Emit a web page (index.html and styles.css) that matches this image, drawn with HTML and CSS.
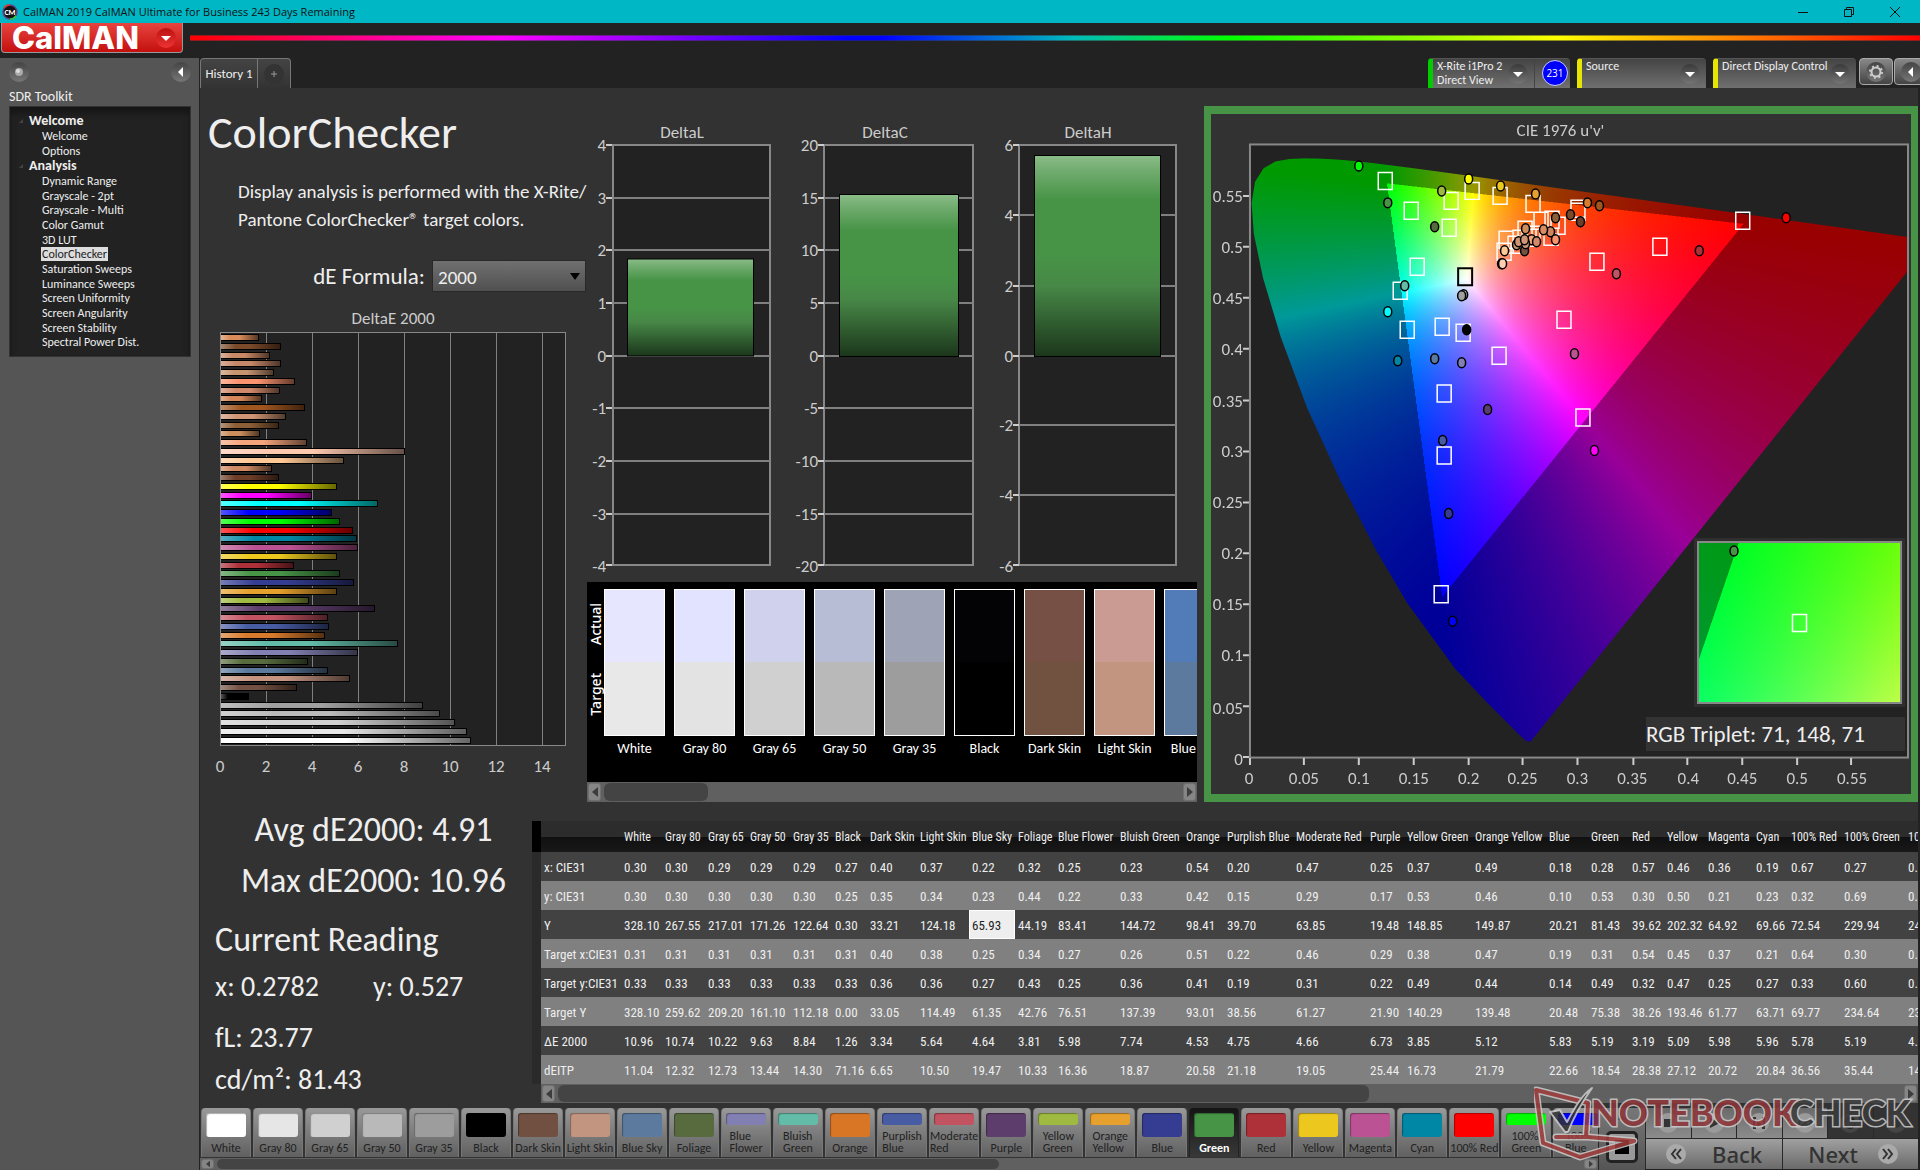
FILE: index.html
```html
<!DOCTYPE html>
<html lang="en">
<head>
<meta charset="utf-8">
<title>CalMAN 2019 CalMAN Ultimate for Business 243 Days Remaining</title>
<link rel="stylesheet" href="styles.css">
</head>
<body>
<header class="titlebar">
  <svg class="app-icon" viewBox="0 0 16 16" aria-hidden="true"><circle cx="8" cy="8" r="7" fill="#111" stroke="#5a4a8a" stroke-width="1.5"/><path d="M2 4A7 7 0 0 1 8 1" stroke="#d33" stroke-width="1.5" fill="none"/><path d="M14 12A7 7 0 0 1 8 15" stroke="#3c3" stroke-width="1.5" fill="none"/><text x="8" y="11" text-anchor="middle" font-size="8" font-weight="700" fill="#fff">CM</text></svg>
  <span class="window-title">CalMAN 2019 CalMAN Ultimate for Business 243 Days Remaining</span>
  <div class="window-buttons">
    <button aria-label="Minimize"><svg viewBox="0 0 12 12"><path d="M1 6.5h10"/></svg></button>
    <button aria-label="Restore"><svg viewBox="0 0 12 12"><path d="M1.500 3.500h7v7h-7zM3.500 3.500v-2h7v7h-2"/></svg></button>
    <button aria-label="Close"><svg viewBox="0 0 12 12"><path d="M1 1l10 10M11 1L1 11"/></svg></button>
  </div>
</header>
<div class="brandbar">
  <button class="brand">CalMAN<span class="round round-red"><svg viewBox="0 0 20 20"><path d="M5 8h10l-5 5z" fill="#fff"/></svg></span></button>
  <div class="rainbow"></div>
</div>
<div class="workspace">
  <aside class="sidebar">
    <div class="sidebar-top">
      <button class="round" aria-label="Pin"><svg viewBox="0 0 20 20"><circle cx="10" cy="10" r="4" fill="#aaa"/><circle cx="9" cy="9" r="2" fill="#ddd"/></svg></button>
      <button class="round" aria-label="Collapse"><svg viewBox="0 0 20 20"><path d="M12 5v10l-5-5z" fill="#fff"/></svg></button>
    </div>
    <h2 class="sidebar-title">SDR Toolkit</h2>
    <nav class="tree">
      <h3>Welcome</h3>
      <ul class="short"><li><a href="#">Welcome</a></li><li><a href="#">Options</a></li></ul>
      <h3>Analysis</h3>
      <ul class="long"><li><a href="#">Dynamic Range</a></li><li><a href="#">Grayscale - 2pt</a></li><li><a href="#">Grayscale - Multi</a></li><li><a href="#">Color Gamut</a></li><li><a href="#">3D LUT</a></li><li><a href="#" class="current">ColorChecker</a></li><li><a href="#">Saturation Sweeps</a></li><li><a href="#">Luminance Sweeps</a></li><li><a href="#">Screen Uniformity</a></li><li><a href="#">Screen Angularity</a></li><li><a href="#">Screen Stability</a></li><li><a href="#">Spectral Power Dist.</a></li></ul>
    </nav>
  </aside>
  <div class="stage">
    <div class="tabs">
      <div class="tabset"><button class="tab">History 1</button><button class="tab tab-add" aria-label="Add tab"><span class="round"><svg viewBox="0 0 20 20"><path d="M10 7v6M7 10h6" stroke="#999"/></svg></span></button></div>
      <div class="devices">
        <button class="device meter"><span class="device-name">X-Rite i1Pro 2<br>Direct View</span><span class="round"><svg viewBox="0 0 20 20"><path d="M5 8h10l-5 5z" fill="#fff"/></svg></span><span class="badge-slot"><span class="badge">231</span></span></button>
        <button class="device source"><span class="device-name">Source</span><span class="round"><svg viewBox="0 0 20 20"><path d="M5 8h10l-5 5z" fill="#fff"/></svg></span></button>
        <button class="device display"><span class="device-name">Direct Display Control</span><span class="round"><svg viewBox="0 0 20 20"><path d="M5 8h10l-5 5z" fill="#fff"/></svg></span></button>
        <button class="tool" aria-label="Settings"><span class="round"><svg viewBox="0 0 20 20"><circle cx="10" cy="10" r="4.500" fill="none" stroke="#ccc" stroke-width="2"/><circle cx="10" cy="10" r="6" fill="none" stroke="#ccc" stroke-width="2" stroke-dasharray="2 2.700"/></svg></span></button>
        <button class="tool" aria-label="Collapse panel"><span class="round"><svg viewBox="0 0 20 20"><path d="M12 5v10l-5-5z" fill="#fff"/></svg></span></button>
      </div>
    </div>
    <main class="main">
      <section class="upper">
        <div class="intro">
          <h1>ColorChecker</h1>
          <p class="lead">Display analysis is performed with the X-Rite/<br>Pantone ColorChecker® target colors.</p>
          <div class="formula"><label for="formula">dE Formula:</label><div class="select"><select id="formula"><option>2000</option></select></div></div>
          <h2 class="chart-title">DeltaE 2000</h2>
          <div class="hbars">
            <i style="width:11.100%;--c:#d98c5a"></i><i style="width:17.500%;--c:#7a4a2a"></i><i style="width:14.300%;--c:#c98966"></i><i style="width:17.500%;--c:#c58868"></i><i style="width:15.400%;--c:#c79470"></i><i style="width:21.500%;--c:#f9946f"></i><i style="width:17.200%;--c:#d1896b"></i><i style="width:12%;--c:#d6875a"></i><i style="width:24.400%;--c:#a0561f"></i><i style="width:18.900%;--c:#d09574"></i><i style="width:16.800%;--c:#8d5f36"></i><i style="width:11.400%;--c:#cb8e5c"></i><i style="width:25%;--c:#f5a57c"></i><i style="width:53.400%;--c:#ffc9b0"></i><i style="width:35.700%;--c:#ffc897"></i><i style="width:14.900%;--c:#cf8a63"></i><i style="width:16.800%;--c:#6e3e28"></i><i style="width:33.700%;--c:#ff0"></i><i style="width:26.400%;--c:#f0f"></i><i style="width:45.600%;--c:#0ff"></i><i style="width:32.200%;--c:#00f"></i><i style="width:34.600%;--c:#0f0"></i><i style="width:38.300%;--c:#f00"></i><i style="width:39.500%;--c:#0087a5"></i><i style="width:39.800%;--c:#bb5293"></i><i style="width:33.700%;--c:#ecc81f"></i><i style="width:21.200%;--c:#ae3038"></i><i style="width:34.600%;--c:#479447"></i><i style="width:38.600%;--c:#343d92"></i><i style="width:33.700%;--c:#e6a02d"></i><i style="width:25.600%;--c:#9fba40"></i><i style="width:44.700%;--c:#5d3d6b"></i><i style="width:31.100%;--c:#c25360"></i><i style="width:31.400%;--c:#485ca4"></i><i style="width:30.200%;--c:#d87a2c"></i><i style="width:51.400%;--c:#63bca8"></i><i style="width:39.800%;--c:#8280b2"></i><i style="width:25.300%;--c:#586b3f"></i><i style="width:31.100%;--c:#5c7a9e"></i><i style="width:37.500%;--c:#c59480"></i><i style="width:22.100%;--c:#735143"></i><i style="width:8.200%;--c:#000"></i><i style="width:58.600%;--c:#a0a0a0"></i><i style="width:63.800%;--c:#bababa"></i><i style="width:67.900%;--c:#d2d2d2"></i><i style="width:71.600%;--c:#e8e8e8"></i><i style="width:72.800%;--c:#fff"></i>
          </div>
          <div class="haxis"><span>0</span><span>2</span><span>4</span><span>6</span><span>8</span><span>10</span><span>12</span><span>14</span></div>
        </div>
        <div class="middle">
          <svg class="deltas" viewBox="587 106 610 476" role="img" aria-label="DeltaL, DeltaC and DeltaH bar charts">
            <defs><linearGradient id="bar" x1="0" y1="0" x2="0" y2="1"><stop offset="0" stop-color="#8bbd88"/><stop offset=".08" stop-color="#70ab6e"/><stop offset=".22" stop-color="#479447"/><stop offset=".5" stop-color="#479447"/><stop offset=".65" stop-color="#478747"/><stop offset="1" stop-color="#1b361b"/></linearGradient></defs>
            <g class="plot"><rect x="613" y="145" width="157" height="420"/><rect x="824" y="145" width="149" height="420"/><rect x="1019" y="145" width="157" height="420"/></g>
            <path class="grid" d="M613 198h157M613 250h157M613 303h157M613 356h157M613 408h157M613 461h157M613 514h157M824 198h149M824 250h149M824 303h149M824 356h149M824 408h149M824 461h149M824 514h149M1019 215h157M1019 286h157M1019 356h157M1019 425h157M1019 495h157"/>
            <path class="ticks" d="M606 145h6M606 198h6M606 250h6M606 303h6M606 356h6M606 408h6M606 461h6M606 514h6M606 565h6M818 145h6M818 198h6M818 250h6M818 303h6M818 356h6M818 408h6M818 461h6M818 514h6M818 565h6M1013 145h6M1013 215h6M1013 286h6M1013 356h6M1013 425h6M1013 495h6M1013 565h6"/>
            <g fill="url(#bar)" stroke="#000"><rect x="627.500" y="259" width="126" height="97"/><rect x="839.500" y="194.500" width="119" height="162"/><rect x="1034.500" y="155.500" width="126" height="201"/></g>
            <g class="axis" text-anchor="middle"><text x="682" y="138">DeltaL</text><text x="885" y="138">DeltaC</text><text x="1088" y="138">DeltaH</text></g>
            <g class="axis" text-anchor="end"><text x="606" y="151">4</text><text x="606" y="204">3</text><text x="606" y="256">2</text><text x="606" y="309">1</text><text x="606" y="362">0</text><text x="606" y="414">-1</text><text x="606" y="467">-2</text><text x="606" y="520">-3</text><text x="606" y="572">-4</text><text x="818" y="151">20</text><text x="818" y="204">15</text><text x="818" y="256">10</text><text x="818" y="309">5</text><text x="818" y="362">0</text><text x="818" y="414">-5</text><text x="818" y="467">-10</text><text x="818" y="520">-15</text><text x="818" y="572">-20</text><text x="1013" y="151">6</text><text x="1013" y="221">4</text><text x="1013" y="292">2</text><text x="1013" y="362">0</text><text x="1013" y="431">-2</text><text x="1013" y="501">-4</text><text x="1013" y="572">-6</text></g>
          </svg>
          <div class="strip">
            <div class="strip-side"><span>Actual</span><span>Target</span></div>
            <div class="patches">
              <figure><div style="--a:#e6e6ff;--t:#e8e8e8"></div><figcaption>White</figcaption></figure>
              <figure><div style="--a:#e1e3ff;--t:#e3e3e3"></div><figcaption>Gray 80</figcaption></figure>
              <figure><div style="--a:#d0d1ec;--t:#d0d0d0"></div><figcaption>Gray 65</figcaption></figure>
              <figure><div style="--a:#b7bdd4;--t:#b9b9b9"></div><figcaption>Gray 50</figcaption></figure>
              <figure><div style="--a:#9ea4b6;--t:#9d9d9d"></div><figcaption>Gray 35</figcaption></figure>
              <figure><div style="--a:#030305;--t:#000"></div><figcaption>Black</figcaption></figure>
              <figure><div style="--a:#775045;--t:#715241"></div><figcaption>Dark Skin</figcaption></figure>
              <figure><div style="--a:#c99b93;--t:#c29580"></div><figcaption>Light Skin</figcaption></figure>
              <figure><div style="--a:#527cb8;--t:#5c7a9e"></div><figcaption>Blue Sky</figcaption></figure>
            </div>
          </div>
          <div class="scroll scroll-strip"><button aria-label="Scroll left"><svg viewBox="0 0 8 12"><path d="M7 1v10L1 6z"/></svg></button><span class="thumb"></span><button aria-label="Scroll right"><svg viewBox="0 0 8 12"><path d="M1 1v10l6-5z"/></svg></button></div>
        </div>
        <div class="cie">
          <canvas id="gamut" width="1320" height="1228"></canvas>
          <svg class="cie-plot" viewBox="1211 114 701 681" role="img" aria-label="CIE 1976 u'v' chromaticity diagram">
            <rect class="frame" x="1250" y="144.500" width="659" height="614"/>
            <path class="ticks" d="M1243 758h6M1243 707h6M1243 656h6M1243 605h6M1243 554h6M1243 503h6M1243 452h6M1243 401h6M1243 349h6M1243 298h6M1243 247h6M1243 196h6M1250 759v7M1304 759v7M1359 759v7M1414 759v7M1469 759v7M1523 759v7M1578 759v7M1634 759v7M1688 759v7M1743 759v7M1798 759v7M1852 759v7"/>
            <g class="axis" text-anchor="end"><text x="1243" y="766">0</text><text x="1243" y="715">0.05</text><text x="1243" y="662">0.1</text><text x="1243" y="611">0.15</text><text x="1243" y="560">0.2</text><text x="1243" y="509">0.25</text><text x="1243" y="458">0.3</text><text x="1243" y="407">0.35</text><text x="1243" y="355">0.4</text><text x="1243" y="304">0.45</text><text x="1243" y="253">0.5</text><text x="1243" y="202">0.55</text></g>
            <g class="axis" text-anchor="middle"><text x="1561" y="136">CIE 1976 u'v'</text><text x="1249" y="785">0</text><text x="1304" y="785">0.05</text><text x="1359" y="785">0.1</text><text x="1414" y="785">0.15</text><text x="1469" y="785">0.2</text><text x="1523" y="785">0.25</text><text x="1578" y="785">0.3</text><text x="1633" y="785">0.35</text><text x="1689" y="785">0.4</text><text x="1743" y="785">0.45</text><text x="1798" y="785">0.5</text><text x="1853" y="785">0.55</text></g>
            <path class="targets" d="M1378.500 172.500h14v17h-14zM1404.500 202.500h14v17h-14zM1444.500 192.500h14v17h-14zM1465.500 182.500h14v17h-14zM1442.500 219.500h14v17h-14zM1493.500 187.500h14v17h-14zM1526.500 195.500h14v17h-14zM1410.500 258.500h14v17h-14zM1393.500 282.500h14v17h-14zM1400.500 321.500h14v17h-14zM1435.500 318.500h14v17h-14zM1456.500 324.500h14v17h-14zM1492.500 347.500h14v17h-14zM1437.500 385.500h14v17h-14zM1557.500 311.500h14v17h-14zM1590.500 253.500h14v17h-14zM1653.500 238.500h14v17h-14zM1736.500 212.500h14v17h-14zM1576.500 409.500h14v17h-14zM1437.500 447.500h14v17h-14zM1434.500 586.500h14v17h-14zM1499.500 231.500h14v17h-14zM1497.500 243.500h14v17h-14zM1508.500 236.500h14v17h-14zM1513.500 230.500h14v17h-14zM1518.500 221.500h14v17h-14zM1534.500 212.500h14v17h-14zM1545.500 211.500h14v17h-14zM1551.500 217.500h14v17h-14zM1544.500 228.500h14v17h-14zM1571.500 200.500h14v17h-14zM1571.500 203.500h14v17h-14zM1526.500 226.500h14v17h-14zM1522.500 229.500h14v17h-14zM1513.500 236.500h14v17h-14z"/>
            <rect x="1458.500" y="268.500" width="14" height="17" fill="none" stroke="#000" stroke-width="2"/>
            <g class="dots">
              <ellipse cx="1359" cy="166" fill="#0f0"/><ellipse cx="1388" cy="203" fill="#479447"/><ellipse cx="1442" cy="191" fill="#9fba40"/><ellipse cx="1469" cy="179" fill="#ff0"/><ellipse cx="1501" cy="186" fill="#ecc81f"/><ellipse cx="1536" cy="194" fill="#e6a02d"/><ellipse cx="1435" cy="227" fill="#586b3f"/><ellipse cx="1405" cy="286" fill="#63bca8"/><ellipse cx="1388" cy="312" fill="#0ff"/><ellipse cx="1398" cy="361" fill="#0087a5"/><ellipse cx="1435" cy="359" fill="#5c7a9e"/><ellipse cx="1462" cy="363" fill="#8280b2"/><ellipse cx="1467" cy="330" fill="#000"/><ellipse cx="1464" cy="295" fill="#bbb"/><ellipse cx="1462" cy="296" fill="#a0a0a0"/><ellipse cx="1575" cy="354" fill="#bb5293"/><ellipse cx="1617" cy="274" fill="#c25360"/><ellipse cx="1700" cy="251" fill="#ae3038"/><ellipse cx="1787" cy="218" fill="#f00"/><ellipse cx="1488" cy="410" fill="#5d3d6b"/><ellipse cx="1443" cy="441" fill="#485ca4"/><ellipse cx="1595" cy="451" fill="#f0f"/><ellipse cx="1449" cy="514" fill="#343d92"/><ellipse cx="1453" cy="622" fill="#00f"/><ellipse cx="1588" cy="203" fill="#d87a2c"/><ellipse cx="1600" cy="206" fill="#a0561f"/><ellipse cx="1571" cy="215" fill="#7a4a2a"/><ellipse cx="1581" cy="222" fill="#6e3e28"/><ellipse cx="1556" cy="218" fill="#8d5f36"/><ellipse cx="1551" cy="232" fill="#cd8562"/><ellipse cx="1544" cy="230" fill="#d98c63"/><ellipse cx="1556" cy="240" fill="#f9946f"/><ellipse cx="1526" cy="229" fill="#cb8e5c"/><ellipse cx="1525" cy="251" fill="#735143"/><ellipse cx="1532" cy="240" fill="#f5a57c"/><ellipse cx="1517" cy="245" fill="#c79470"/><ellipse cx="1526" cy="244" fill="#c59480"/><ellipse cx="1537" cy="242" fill="#d1896b"/><ellipse cx="1519" cy="242" fill="#d09574"/><ellipse cx="1525" cy="240" fill="#d09574"/><ellipse cx="1505" cy="251" fill="#ffc897"/><ellipse cx="1502" cy="264" fill="#ffc9b0"/><ellipse cx="1503" cy="264" fill="#ffcfb4"/>
            </g>
          </svg>
          <div class="cie-side">
            <div class="inset"><canvas id="detail" width="402" height="318"></canvas><svg viewBox="0 0 201 159"><rect class="targets" x="93.500" y="71.500" width="14" height="17"/><g class="dots"><ellipse cx="35" cy="8" fill="#479447"/></g></svg></div>
            <output class="triplet">RGB Triplet: 71, 148, 71</output>
          </div>
        </div>
      </section>
      <section class="lower">
        <div class="stats">
          <p class="big">Avg dE2000: 4.91</p><p class="big">Max dE2000: 10.96</p>
          <h2>Current Reading</h2>
          <p class="pair"><span>x: 0.2782</span><span>y: 0.527</span></p>
          <p class="fl">fL: 23.77</p><p>cd/m²: 81.43</p>
        </div>
        <div class="grid-view">
          <div class="gutter"></div>
          <div class="table-area">
          <table>
            <colgroup><col style="width:80px"><col style="width:41px"><col style="width:43px"><col style="width:42px"><col style="width:43px"><col style="width:42px"><col style="width:35px"><col style="width:50px"><col style="width:52px"><col style="width:46px"><col style="width:40px"><col style="width:62px"><col style="width:66px"><col style="width:41px"><col style="width:69px"><col style="width:74px"><col style="width:37px"><col style="width:68px"><col style="width:74px"><col style="width:42px"><col style="width:41px"><col style="width:35px"><col style="width:41px"><col style="width:48px"><col style="width:35px"><col style="width:53px"><col style="width:64px"><col style="width:60px"></colgroup>
            <thead><tr><th></th><th>White</th><th>Gray 80</th><th>Gray 65</th><th>Gray 50</th><th>Gray 35</th><th>Black</th><th>Dark Skin</th><th>Light Skin</th><th>Blue Sky</th><th>Foliage</th><th>Blue Flower</th><th>Bluish Green</th><th>Orange</th><th>Purplish Blue</th><th>Moderate Red</th><th>Purple</th><th>Yellow Green</th><th>Orange Yellow</th><th>Blue</th><th>Green</th><th>Red</th><th>Yellow</th><th>Magenta</th><th>Cyan</th><th>100% Red</th><th>100% Green</th><th>100% Blue</th></tr></thead>
            <tbody>
            <tr><th>x: CIE31</th><td>0.30</td><td>0.30</td><td>0.29</td><td>0.29</td><td>0.29</td><td>0.27</td><td>0.40</td><td>0.37</td><td>0.22</td><td>0.32</td><td>0.25</td><td>0.23</td><td>0.54</td><td>0.20</td><td>0.47</td><td>0.25</td><td>0.37</td><td>0.49</td><td>0.18</td><td>0.28</td><td>0.57</td><td>0.46</td><td>0.36</td><td>0.19</td><td>0.67</td><td>0.27</td><td>0.15</td></tr>
            <tr><th>y: CIE31</th><td>0.30</td><td>0.30</td><td>0.30</td><td>0.30</td><td>0.30</td><td>0.25</td><td>0.35</td><td>0.34</td><td>0.23</td><td>0.44</td><td>0.22</td><td>0.33</td><td>0.42</td><td>0.15</td><td>0.29</td><td>0.17</td><td>0.53</td><td>0.46</td><td>0.10</td><td>0.53</td><td>0.30</td><td>0.50</td><td>0.21</td><td>0.23</td><td>0.32</td><td>0.69</td><td>0.05</td></tr>
            <tr><th>Y</th><td>328.10</td><td>267.55</td><td>217.01</td><td>171.26</td><td>122.64</td><td>0.30</td><td>33.21</td><td>124.18</td><td class="selected">65.93</td><td>44.19</td><td>83.41</td><td>144.72</td><td>98.41</td><td>39.70</td><td>63.85</td><td>19.48</td><td>148.85</td><td>149.87</td><td>20.21</td><td>81.43</td><td>39.62</td><td>202.32</td><td>64.92</td><td>69.66</td><td>72.54</td><td>229.94</td><td>24.10</td></tr>
            <tr><th>Target x:CIE31</th><td>0.31</td><td>0.31</td><td>0.31</td><td>0.31</td><td>0.31</td><td>0.31</td><td>0.40</td><td>0.38</td><td>0.25</td><td>0.34</td><td>0.27</td><td>0.26</td><td>0.51</td><td>0.22</td><td>0.46</td><td>0.29</td><td>0.38</td><td>0.47</td><td>0.19</td><td>0.31</td><td>0.54</td><td>0.45</td><td>0.37</td><td>0.21</td><td>0.64</td><td>0.30</td><td>0.15</td></tr>
            <tr><th>Target y:CIE31</th><td>0.33</td><td>0.33</td><td>0.33</td><td>0.33</td><td>0.33</td><td>0.33</td><td>0.36</td><td>0.36</td><td>0.27</td><td>0.43</td><td>0.25</td><td>0.36</td><td>0.41</td><td>0.19</td><td>0.31</td><td>0.22</td><td>0.49</td><td>0.44</td><td>0.14</td><td>0.49</td><td>0.32</td><td>0.47</td><td>0.25</td><td>0.27</td><td>0.33</td><td>0.60</td><td>0.06</td></tr>
            <tr><th>Target Y</th><td>328.10</td><td>259.62</td><td>209.20</td><td>161.10</td><td>112.18</td><td>0.00</td><td>33.05</td><td>114.49</td><td>61.35</td><td>42.76</td><td>76.51</td><td>137.39</td><td>93.01</td><td>38.56</td><td>61.27</td><td>21.90</td><td>140.29</td><td>139.48</td><td>20.48</td><td>75.38</td><td>38.26</td><td>193.46</td><td>61.77</td><td>63.71</td><td>69.77</td><td>234.64</td><td>23.69</td></tr>
            <tr><th>ΔE 2000</th><td>10.96</td><td>10.74</td><td>10.22</td><td>9.63</td><td>8.84</td><td>1.26</td><td>3.34</td><td>5.64</td><td>4.64</td><td>3.81</td><td>5.98</td><td>7.74</td><td>4.53</td><td>4.75</td><td>4.66</td><td>6.73</td><td>3.85</td><td>5.12</td><td>5.83</td><td>5.19</td><td>3.19</td><td>5.09</td><td>5.98</td><td>5.96</td><td>5.78</td><td>5.19</td><td>4.84</td></tr>
            <tr><th>dEITP</th><td>11.04</td><td>12.32</td><td>12.73</td><td>13.44</td><td>14.30</td><td>71.16</td><td>6.65</td><td>10.50</td><td>19.47</td><td>10.33</td><td>16.36</td><td>18.87</td><td>20.58</td><td>21.18</td><td>19.05</td><td>25.44</td><td>16.73</td><td>21.79</td><td>22.66</td><td>18.54</td><td>28.38</td><td>27.12</td><td>20.72</td><td>20.84</td><td>36.56</td><td>35.44</td><td>14.20</td></tr>
            </tbody>
          </table>
          <div class="scroll scroll-table"><button aria-label="Scroll left"><svg viewBox="0 0 8 12"><path d="M7 1v10L1 6z"/></svg></button><span class="thumb"></span><button aria-label="Scroll right"><svg viewBox="0 0 8 12"><path d="M1 1v10l6-5z"/></svg></button></div>
          </div>
        </div>
      </section>
      <footer class="dock">
        <div class="swatch-area">
          <div class="swatches">
            <button><i style="--c:#fff"></i><span>White</span></button><button><i style="--c:#e6e6e6"></i><span>Gray 80</span></button><button><i style="--c:#d0d0d0"></i><span>Gray 65</span></button><button><i style="--c:#b9b9b9"></i><span>Gray 50</span></button><button><i style="--c:#9d9d9d"></i><span>Gray 35</span></button><button><i style="--c:#000"></i><span>Black</span></button><button><i style="--c:#715041"></i><span>Dark Skin</span></button><button><i style="--c:#c29580"></i><span>Light Skin</span></button><button><i style="--c:#5c7a9e"></i><span>Blue Sky</span></button><button><i style="--c:#586b3f"></i><span>Foliage</span></button><button><i style="--c:#8280b2"></i><span>Blue<br>Flower</span></button><button><i style="--c:#63bca8"></i><span>Bluish<br>Green</span></button><button><i style="--c:#d87626"></i><span>Orange</span></button><button><i style="--c:#485ca4"></i><span>Purplish<br>Blue</span></button><button><i style="--c:#c25360"></i><span>Moderate<br>Red</span></button><button><i style="--c:#5d3d6b"></i><span>Purple</span></button><button><i style="--c:#9fba40"></i><span>Yellow<br>Green</span></button><button><i style="--c:#e6a02d"></i><span>Orange<br>Yellow</span></button><button><i style="--c:#343d92"></i><span>Blue</span></button><button class="active"><i style="--c:#479447"></i><span>Green</span></button><button><i style="--c:#ae3038"></i><span>Red</span></button><button><i style="--c:#ecc81f"></i><span>Yellow</span></button><button><i style="--c:#bb5293"></i><span>Magenta</span></button><button><i style="--c:#0087a5"></i><span>Cyan</span></button><button><i style="--c:#f00"></i><span>100% Red</span></button><button><i style="--c:#0f0"></i><span>100%<br>Green</span></button><button><i style="--c:#00f"></i><span>100%<br>Blue</span></button>
          </div>
          <div class="scroll scroll-dock"><button aria-label="Scroll left"><svg viewBox="0 0 8 12"><path d="M7 1v10L1 6z"/></svg></button><span class="thumb"></span><button aria-label="Scroll right"><svg viewBox="0 0 8 12"><path d="M1 1v10l6-5z"/></svg></button></div>
        </div>
        <div class="pattern"><button aria-label="Pattern menu"><svg viewBox="0 0 20 20"><path d="M5 12h10l-5-5z" fill="#555"/></svg></button><button class="pattern-window" aria-label="Pattern window"></button></div>
        <div class="controls">
          <div class="transport">
            <button aria-label="Stop"><svg viewBox="0 0 20 20"><path d="M6 6h8v8H6z"/></svg></button><button aria-label="Play"><svg viewBox="0 0 20 20"><path d="M6 5l10 5-10 5z"/></svg></button><button aria-label="Read series"><svg viewBox="0 0 20 20"><path d="M4 4h3v2H6v8h1v2H4zM16 4h-3v2h1v8h-1v2h3zM8 8l5 3-5 3z"/></svg></button><button aria-label="Loop"><svg viewBox="0 0 20 20"><path d="M10 10c-2-3-6-3-6 0s4 3 6 0 6-3 6 0-4 3-6 0z" fill="none" stroke="#333" stroke-width="2"/></svg></button><button class="off" aria-label="Refresh"><svg viewBox="0 0 20 20"><path d="M5 10a5 5 0 0 1 9-3M15 10a5 5 0 0 1-9 3" fill="none" stroke="#222" stroke-width="2"/></svg></button><button class="off" aria-label="Record"><svg viewBox="0 0 20 20"><circle cx="10" cy="10" r="5"/></svg></button>
          </div>
          <div class="nav"><button class="back"><svg viewBox="0 0 20 20"><path d="M10 5l-4 5 4 5M15 5l-4 5 4 5"/></svg>Back</button><button class="next">Next<svg viewBox="0 0 20 20"><path d="M5 5l4 5-4 5M10 5l4 5-4 5"/></svg></button></div>
        </div>
        <svg class="watermark" viewBox="0 0 384 76" aria-label="Notebookcheck">
          <g fill="none" stroke-linejoin="round" stroke-linecap="round"><path d="M2 5l52 13-2 34h-30l32 0 46 4-54 16L9 58z" stroke="#ccc" stroke-width="7"/><path d="M2 5l52 13-2 34h-30l32 0 46 4-54 16L9 58z" stroke="#a33d3d" stroke-width="4"/><path d="M16 27l10-2 7 12C41 22 48 10 58 3 49 16 40 31 34 47h-3z" fill="#333" stroke="#ccc" stroke-width="2"/></g>
          <g class="mark-text"><text x="57" y="41" fill="#8f3538">NOTEBOOK</text><text x="256" y="41" fill="#3c3c3c">CHECK</text></g>
        </svg>
      </footer>
    </main>
  </div>
</div>
<script src="gamut.js"></script>
</body>
</html>
```
FILE: styles.css
```css
* { box-sizing: border-box; }
body {
  margin: 0;
  min-height: 100vh;
  display: flex;
  flex-direction: column;
  background: #222;
  color: #eee;
  font-family: Carlito, Lato, "Open Sans", sans-serif;
  font-size: 12px;
}
h1, h2, h3, p, ul, figure { margin: 0; padding: 0; font-weight: 400; }
ul { list-style: none; }
button { font: inherit; color: inherit; border: 0; padding: 0; background: none; }
svg { display: block; }

.titlebar { display: flex; align-items: center; height: 23px; background: #00b7c6; color: #111; padding: 0 2px; }
.app-icon { width: 16px; height: 16px; margin-right: 5px; }
.window-title { font: 11px/16px "Open Sans", "Noto Sans", sans-serif; flex: 1; }
.window-buttons { display: flex; }
.window-buttons button { width: 46px; height: 20px; display: grid; place-items: center; }
.window-buttons svg { width: 12px; height: 12px; fill: none; stroke: #111; }

.brandbar { display: flex; height: 35px; gap: 7px; padding-left: 1px; }
.brand {
  display: flex; align-items: center; justify-content: space-between;
  width: 182px; height: 30px; padding: 0 6px 0 10px;
  font: 800 31px/30px Inter, "Open Sans", sans-serif; color: #fff;
  background: linear-gradient(#e8443f, #c4100f);
  border: 1px solid #999; border-top: 0; border-radius: 0 0 4px 4px;
}
.rainbow {
  flex: 1; height: 6px; margin-top: 12px; border-block: 1px solid #3338;
  background: linear-gradient(90deg, #f00, #f0f 18%, #00f 38%, #00f 40%, #0bb 51%, #0f0 60%, #ff0 79%, #f00);
}
.round {
  display: grid; place-items: center; width: 20px; height: 20px; border-radius: 50%;
  background: linear-gradient(#444, #777);
}
.round svg { width: 20px; height: 20px; }
.round-red { background: linear-gradient(#b11, #e33); }

.workspace { flex: 1; display: flex; }
.sidebar { flex: 0 0 199px; background: #555; padding: 4px 8px 4px 9px; }
.sidebar-top { display: flex; justify-content: space-between; }
.sidebar-title { font-size: 14px; line-height: 18px; margin: 6px 0 0; }
.tree { background: #222; border: 1px solid #333; padding: 6px 0 6px 19px; box-shadow: inset 0 6px 6px #161616; height: 251px; }
.tree h3 { font-weight: 700; line-height: 16px; position: relative; }
.tree h3::before { content: ""; position: absolute; left: -10px; top: 6px; border: 2px solid #444; border-top-color: transparent; border-left-color: transparent; }
.tree ul { display: grid; grid-auto-rows: 1fr; padding-left: 12px; }
.tree .short { height: 29px; }
.tree .long { height: 176px; }
.tree a { color: inherit; text-decoration: none; line-height: 14px; display: inline-block; padding: 0 1px; vertical-align: top; }
.tree .current { background: #ddd; color: #222; }

.stage { flex: 1; min-width: 0; display: flex; flex-direction: column; padding: 0 2px 1px 0; border-left: 1px solid #222; }
.tabs { display: flex; justify-content: space-between; height: 30px; overflow: hidden; margin-right: -2px; }
.tabset { display: flex; border: 1px solid #777; border-bottom: 0; border-radius: 4px 4px 0 0; background: linear-gradient(#444, #333); width: 91px; }
.tab { flex: 1; font-size: 13px; display: grid; place-items: center; }
.tab-add { flex: 0 0 33px; border-left: 1px solid #777; }
.tab-add .round { background: #333; }
.devices { display: flex; margin-right: -9px; }
.device {
  display: flex; justify-content: space-between; text-align: left; line-height: 14px;
  background: linear-gradient(#444, #707070); border-top: 1px solid #555; border-left: 5px solid #e6e600;
  border-radius: 4px 4px 0 0; padding: 0 6px 0 4px; margin-right: 7px;
}
.device .round { margin-top: 5px; background: linear-gradient(#3a3a3a, #757575); }
.meter { width: 142px; border-left-color: #0c0; padding-right: 2px; }
.source { width: 129px; }
.display { width: 143px; margin-right: 3px; }
.badge-slot { align-self: stretch; border-left: 1px solid #444; padding: 1px 0 0 7px; }
.badge {
  display: block; width: 26px; height: 26px; border-radius: 50%; border: 1px solid #ccf; background: #00f;
  color: #fff; font: 10px/24px "Open Sans", sans-serif; text-align: center;
}
.tool { width: 34px; height: 27px; border: 1px solid #aaa; border-radius: 4px; background: linear-gradient(#888, #444); display: grid; place-items: center; margin-right: 1px; }

.main { flex: 1; display: flex; flex-direction: column; background: #323232; padding-top: 18px; }
.upper { display: grid; grid-template-columns: 387px 617px minmax(0, 1fr); height: 696px; }
.intro { padding-right: 1px; }
h1 { font-size: 46px; line-height: 52px; padding-left: 8px; }
.lead { font-size: 19px; line-height: 28px; padding-left: 38px; margin-top: 20px; white-space: nowrap; }
.formula { display: flex; align-items: center; justify-content: flex-end; gap: 7px; margin-top: 26px; font-size: 23px; line-height: 32px; }
.select { position: relative; width: 154px; }
.select select { appearance: none; display: block; width: 100%; height: 32px; padding: 2px 5px 0; border: 1px solid #282828; background: linear-gradient(#707070, #505050); color: #eee; font: 19px Carlito, Lato, sans-serif; }
.select::after { content: ""; position: absolute; right: 6px; top: 13px; border: 5px solid transparent; border-top: 7px solid #000; border-bottom: 0; }
.chart-title { font-size: 17px; line-height: 20px; text-align: center; color: #ccc; margin: 17px 0 3px; }
.hbars {
  margin: 0 20px; height: 414px; border: 1px solid #888; padding: 1px 0; display: flex; flex-direction: column; justify-content: space-between;
  background: repeating-linear-gradient(90deg, transparent 0 45px, #808080 45px 46px) #222;
}
.hbars i { display: block; height: 7px; border: 1px solid #000; border-left: 0; background: linear-gradient(90deg, #fff5, #fff0 25%, #0000 50%, #0009), var(--c); }
.haxis { display: grid; grid-template-columns: repeat(8, 46px); margin-left: -3px; padding-top: 10px; color: #ccc; font-size: 17px; line-height: 22px; text-align: center; }

.middle { width: 610px; }
.deltas { width: 610px; height: 476px; }
.axis { font-size: 17px; fill: #ccc; }
.plot rect { fill: #222; stroke: #888; stroke-width: 2; }
.grid { stroke: #808080; stroke-width: 2; }
.ticks { stroke: #ccc; stroke-width: 2; fill: none; }
.strip { display: flex; background: #000; height: 200px; padding-top: 7px; overflow: hidden; }
.strip-side { flex: 0 0 17px; display: flex; flex-direction: column; justify-content: space-around; align-items: center; height: 147px; font: 500 14px/17px "Noto Sans", sans-serif; color: #fff; padding-bottom: 6px; }
.strip-side span { writing-mode: vertical-rl; transform: rotate(180deg); }
.patches { display: flex; gap: 9px; overflow: hidden; }
.patches figure { flex: 0 0 61px; text-align: center; font-size: 14px; line-height: 26px; white-space: nowrap; color: #fff; }
.patches div { height: 147px; border: 1px solid #fff; background: linear-gradient(var(--a) 50%, var(--t) 50%); }

.scroll { display: flex; align-items: center; background: #606060; gap: 3px; padding: 1px; }
.scroll button { flex: 0 0 13px; align-self: stretch; display: grid; place-items: center; background: #858585; border-radius: 3px; border: 1px solid #707070; }
.scroll button:last-child { margin-left: auto; }
.scroll button svg { width: 8px; height: 12px; fill: #3c3c3c; }
.thumb { align-self: stretch; background: #444; border-radius: 6px; }
.scroll-strip { height: 20px; }
.scroll-strip .thumb { width: 104px; }
.scroll-table { height: 19px; }
.scroll-table .thumb { width: 59%; }
.scroll-dock { height: 12px; }
.scroll-dock .thumb { width: 56%; }
.scroll-dock button svg { height: 8px; }

.cie { position: relative; border: 7px solid #479447; border-block-width: 8px; display: grid; }
.cie > * { grid-area: 1 / 1; }
#gamut { width: calc(100% - 41px); height: 614px; margin: 30px 0 0 39px; background: #222; }
.cie-plot { width: 100%; height: 680px; position: relative; }
.frame { fill: none; stroke: #888; stroke-width: 2; }
.targets { fill: none; stroke: #fff; stroke-width: 1.5px; }
.dots ellipse { rx: 4px; ry: 5px; stroke: #000; stroke-width: 1.5px; }
.cie-side { position: relative; justify-self: end; align-self: end; display: flex; flex-direction: column; align-items: flex-end; gap: 8px; margin: 0 6px 43px 0; }
.inset { display: grid; border: 2px solid #888; outline: 3px solid #2f2f2f; width: 205px; height: 163px; margin: 0 3px 5px 0; }
.inset > * { grid-area: 1 / 1; width: 100%; height: 100%; }
.inset svg { position: relative; }
.triplet { width: 259px; background: #333; font-size: 23px; line-height: 34px; white-space: nowrap; }

.lower { display: grid; grid-template-columns: 332px minmax(0, 1fr); flex: 1; }
.stats { padding: 2px 0 0 15px; font-size: 28px; line-height: 36px; }
.stats .big { font-size: 34px; line-height: 51px; text-align: center; }
.stats h2 { font-size: 34px; line-height: 44px; margin: 12px 0 7px; }
.stats .pair { display: flex; gap: 54px; margin-bottom: 15px; }
.stats .fl { margin-bottom: 6px; }
.grid-view { display: flex; margin-top: 19px; }
.gutter { flex: 0 0 9px; height: 263px; background: linear-gradient(#000 31px, #2a2a2a 31px); }
.table-area { flex: 1; min-width: 0; overflow: hidden; }
table { table-layout: fixed; width: 1424px; border-collapse: collapse; font-family: "Roboto Condensed", Roboto, sans-serif; font-size: 13px; color: #eee; }
th, td { padding: 1px 0 0 3px; text-align: left; font-weight: 400; white-space: nowrap; }
thead tr { height: 31px; background: linear-gradient(#2c2c2c 50%, #101010 50%, #181818); font-size: 12px; }
tbody tr { height: 29px; background: #424242; }
tbody tr:nth-child(even) { background: #808080; }
td.selected { background: #eee; color: #222; box-shadow: inset 0 0 0 1px #fff; }

.dock { position: relative; display: grid; grid-template-columns: minmax(0, 1fr) 46px 272px; gap: 1px; background: #282828; margin-top: 5px; height: 61px; }
.swatch-area { background: #333; }
.swatches { display: flex; gap: 2px; height: 50px; overflow: hidden; padding-left: 1px; }
.swatches button {
  flex: 0 0 50px; display: flex; flex-direction: column; align-items: center; height: 49px; padding: 5px 0 3px;
  background: linear-gradient(#999, #606060); border: 1px solid #777; border-block: 0; border-radius: 4px 4px 0 0; color: #222; line-height: 12px;
}
.swatches i { flex: 1; width: 40px; margin-bottom: 5px; background: var(--c); border-radius: 3px; box-shadow: inset 1px 1px 1px #0005; }
.swatches span { white-space: nowrap; text-align: left; }
.swatches .active { background: linear-gradient(#151515, #383838); border-color: #222; color: #fff; font-weight: 700; }
.pattern { background: linear-gradient(#777, #555); display: flex; flex-direction: column; align-items: center; gap: 3px; }
.pattern svg { width: 20px; height: 20px; }
.pattern-window { width: 32px; height: 32px; border: 3px solid #222; border-radius: 5px; background: linear-gradient(#000, #000) center / 14px 14px no-repeat #999; }
.controls { display: grid; grid-template-rows: 30px 30px; gap: 1px; }
.transport { display: grid; grid-template-columns: repeat(6, 1fr); gap: 1px; }
.transport button { display: grid; place-items: center; background: linear-gradient(#6a6a6a, #8c8c8c); }
.transport svg { width: 20px; height: 20px; border-radius: 50%; background: #9a9a9a; fill: #333; }
.transport .off { background: #333; }
.transport .off svg { background: #444; fill: #333; }
.nav { display: grid; grid-template-columns: 1fr 1fr; gap: 1px; }
.nav button { display: flex; align-items: center; gap: 26px; padding: 0 20px; background: linear-gradient(#a0a0a0, #6a6a6a); color: #333; font: 500 22px "Noto Sans", sans-serif; }
.nav .next { justify-content: flex-end; gap: 20px; }
.nav svg { width: 20px; height: 20px; border-radius: 50%; background: #aaa; fill: none; stroke: #333; stroke-width: 2; }
.watermark { position: absolute; right: 0; bottom: 8px; width: 384px; height: 76px; opacity: .85; pointer-events: none; }
.mark-text { font: 900 36px Lato, sans-serif; stroke: #ccc; stroke-width: 3px; paint-order: stroke; }
```
FILE: gamut.js
```js
// CIE 1931 x,y of the spectral locus, 380 nm upwards
const LOCUS = [[.1741,.005],[.1733,.0048],[.1714,.0051],[.1689,.0069],[.1644,.0109],[.1566,.0177],[.144,.0297],[.1241,.0578],[.1096,.0868],[.0913,.1327],[.0687,.2007],[.0454,.295],[.0235,.4127],[.0082,.5384],[.0039,.6548],[.0139,.7502],[.0389,.812],[.0743,.8338],[.1142,.8262],[.1547,.8059],[.1929,.7816],[.2296,.7543],[.2658,.7243],[.3016,.6923],[.3373,.6589],[.3731,.6245],[.4441,.5547],[.5125,.4866],[.5752,.4242],[.627,.3725],[.6658,.334],[.6915,.3083],[.7079,.292],[.719,.2809],[.726,.274],[.7347,.2653]];

// Colour of a chromaticity at full drive; dimmed when it lies outside Rec.709
function colour(x, y) {
  const X = x / y, Z = (1 - x - y) / y;
  const rgb = [3.2406 * X - 1.5372 - 0.4986 * Z, -0.9689 * X + 1.8758 + 0.0415 * Z, 0.0557 * X - 0.204 + 1.057 * Z];
  const gain = (Math.min(...rgb) < 0 ? 153 : 255) / Math.max(...rgb);
  return rgb.map(c => Math.max(0, c) * gain);
}

function paint(canvas, toXy) {
  const ctx = canvas.getContext('2d');
  const { width, height } = canvas;
  const image = ctx.createImageData(width, height);
  for (let j = 0, k = 0; j < height; j++) {
    for (let i = 0; i < width; i++, k += 4) {
      const [x, y] = toXy(i / 2, j / 2);
      const [r, g, b] = colour(x, Math.max(y, 0.001));
      image.data[k] = r; image.data[k + 1] = g; image.data[k + 2] = b; image.data[k + 3] = 255;
    }
  }
  ctx.putImageData(image, 0, 0);
  return ctx;
}

const SU = 1096, SV = 1022;
const main = paint(document.getElementById('gamut'), (px, py) => {
  const u = px / SU, v = (614 - py) / SV, d = 6 * u - 16 * v + 12;
  return [9 * u / d, 4 * v / d];
});
main.globalCompositeOperation = 'destination-in';
main.beginPath();
LOCUS.forEach(([x, y]) => {
  const d = -2 * x + 12 * y + 3;
  main.lineTo(4 * x / d * SU * 2, (614 - 9 * y / d * SV) * 2);
});
main.closePath();
main.fill();

paint(document.getElementById('detail'), (px, py) => [0.31 + (px - 100) / 2170, 0.49 - (py - 80) / 1770]);
```
